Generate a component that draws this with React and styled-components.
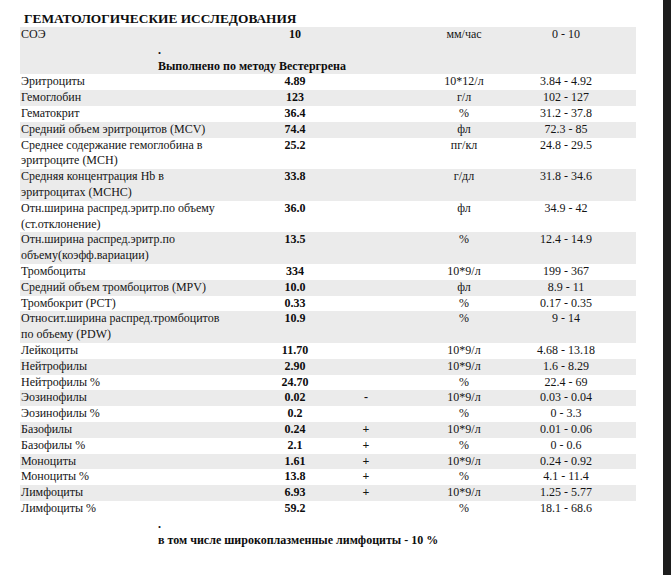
import React from 'react';
import styled, { createGlobalStyle } from 'styled-components';

const serif = `"Liberation Serif", "Times New Roman", Times, "DejaVu Serif", serif`;

const GlobalStyle = createGlobalStyle`
  html, body { margin: 0; padding: 0; background: #ffffff; }
  body {
    font-family: ${serif};
    color: #141414;
  }
`;

const Page = styled.div`
  display: flex;
  min-height: 100vh;
`;

const Sheet = styled.main`
  flex: 1;
  padding: 10px 27px 0 20px;
`;

const Edge = styled.div`
  width: 8px;
  flex-shrink: 0;
  background: #1d1d1d;
`;

const Title = styled.h1`
  margin: 0;
  padding-left: 4px;
  font-family: ${serif};
  font-size: 13.35px;
  font-weight: bold;
  line-height: 17px;
  color: #0d0d0d;
`;

const Table = styled.div`
  width: 616px;
  font-family: ${serif};
  font-size: 12px;
  line-height: 15.8px;
`;

const Row = styled.div`
  background: ${(p) => (p.$shaded ? '#ebebeb' : 'transparent')};
`;

const Cells = styled.div`
  display: grid;
  grid-template-columns: 235px 80px 62px 134px 70px 1fr;
`;

const Label = styled.div`
  padding-left: 1px;
`;

const Value = styled.div`
  text-align: center;
  font-weight: bold;
  color: #0d0d0d;
`;

const Flag = styled.div`
  text-align: center;
  font-weight: bold;
`;

const Unit = styled.div`
  text-align: center;
  white-space: nowrap;
`;

const Range = styled.div`
  text-align: center;
  white-space: nowrap;
`;

const Note = styled.div`
  padding-left: 138px;
  font-weight: bold;
  color: #0d0d0d;
`;

const rows = [
  { label: ['СОЭ'], value: '10', unit: 'мм/час', range: '0 - 10', note: 'Выполнено по методу Вестергрена' },
  { label: ['Эритроциты'], value: '4.89', unit: '10*12/л', range: '3.84 - 4.92' },
  { label: ['Гемоглобин'], value: '123', unit: 'г/л', range: '102 - 127' },
  { label: ['Гематокрит'], value: '36.4', unit: '%', range: '31.2 - 37.8' },
  { label: ['Средний объем эритроцитов (MCV)'], value: '74.4', unit: 'фл', range: '72.3 - 85' },
  { label: ['Среднее содержание гемоглобина в', 'эритроците (MCH)'], value: '25.2', unit: 'пг/кл', range: '24.8 - 29.5' },
  { label: ['Средняя концентрация Hb в', 'эритроцитах (MCHC)'], value: '33.8', unit: 'г/дл', range: '31.8 - 34.6' },
  { label: ['Отн.ширина распред.эритр.по объему', '(ст.отклонение)'], value: '36.0', unit: 'фл', range: '34.9 - 42' },
  { label: ['Отн.ширина распред.эритр.по', 'объему(коэфф.вариации)'], value: '13.5', unit: '%', range: '12.4 - 14.9' },
  { label: ['Тромбоциты'], value: '334', unit: '10*9/л', range: '199 - 367' },
  { label: ['Средний объем тромбоцитов (MPV)'], value: '10.0', unit: 'фл', range: '8.9 - 11' },
  { label: ['Тромбокрит (PCT)'], value: '0.33', unit: '%', range: '0.17 - 0.35' },
  { label: ['Относит.ширина распред.тромбоцитов', 'по объему (PDW)'], value: '10.9', unit: '%', range: '9 - 14' },
  { label: ['Лейкоциты'], value: '11.70', unit: '10*9/л', range: '4.68 - 13.18' },
  { label: ['Нейтрофилы'], value: '2.90', unit: '10*9/л', range: '1.6 - 8.29' },
  { label: ['Нейтрофилы %'], value: '24.70', unit: '%', range: '22.4 - 69' },
  { label: ['Эозинофилы'], value: '0.02', flag: '-', unit: '10*9/л', range: '0.03 - 0.04' },
  { label: ['Эозинофилы %'], value: '0.2', unit: '%', range: '0 - 3.3' },
  { label: ['Базофилы'], value: '0.24', flag: '+', unit: '10*9/л', range: '0.01 - 0.06' },
  { label: ['Базофилы %'], value: '2.1', flag: '+', unit: '%', range: '0 - 0.6' },
  { label: ['Моноциты'], value: '1.61', flag: '+', unit: '10*9/л', range: '0.24 - 0.92' },
  { label: ['Моноциты %'], value: '13.8', flag: '+', unit: '%', range: '4.1 - 11.4' },
  { label: ['Лимфоциты'], value: '6.93', flag: '+', unit: '10*9/л', range: '1.25 - 5.77' },
  { label: ['Лимфоциты %'], value: '59.2', unit: '%', range: '18.1 - 68.6' },
];

export default function App() {
  return (
    <>
      <GlobalStyle />
      <Page>
        <Sheet>
          <Title>ГЕМАТОЛОГИЧЕСКИЕ ИССЛЕДОВАНИЯ</Title>
          <Table>
            {rows.map((r, i) => (
              <Row key={i} $shaded={i % 2 === 0}>
                <Cells>
                  <Label>
                    {r.label.map((line, j) => (
                      <React.Fragment key={j}>
                        {j > 0 && <br />}
                        {line}
                      </React.Fragment>
                    ))}
                  </Label>
                  <Value>{r.value}</Value>
                  <Flag>{r.flag || ''}</Flag>
                  <Unit>{r.unit}</Unit>
                  <Range>{r.range}</Range>
                  <div />
                </Cells>
                {r.note && (
                  <Note>
                    .<br />
                    {r.note}
                  </Note>
                )}
              </Row>
            ))}
            <Note>
              .<br />
              в том числе широкоплазменные лимфоциты - 10 %
            </Note>
          </Table>
        </Sheet>
        <Edge />
      </Page>
    </>
  );
}
